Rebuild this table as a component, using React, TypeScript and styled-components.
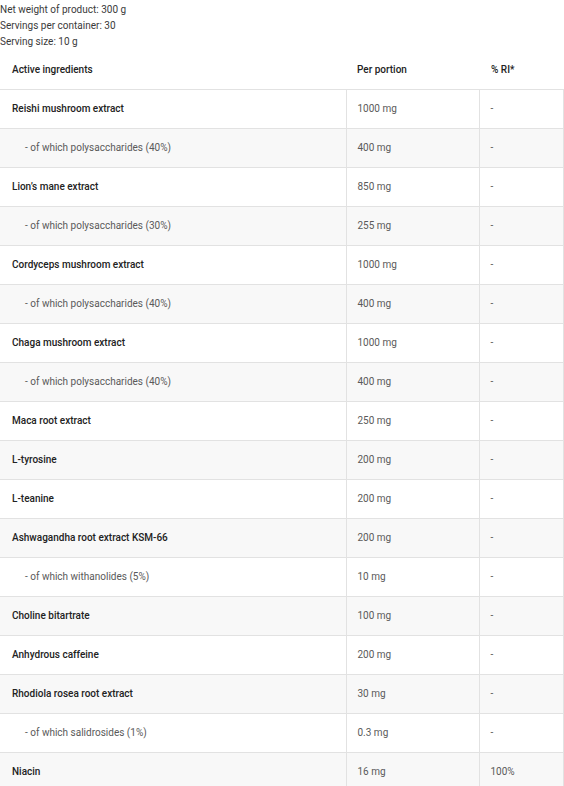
import React from "react";
import styled, { createGlobalStyle } from "styled-components";

const Global = createGlobalStyle`
  html, body { margin: 0; padding: 0; background: #fff; }
  body { font-family: Roboto, "Open Sans", "Liberation Sans", sans-serif; }
`;

const Page = styled.div`
  width: 564px;
  padding-top: 2px;
`;

const Info = styled.div`
  font-size: 10px;
  line-height: 16px;
  color: #3a3a3a;
`;

const Table = styled.table`
  width: 563px;
  border-collapse: collapse;
  table-layout: fixed;
  font-size: 10px;
`;

const HeadCell = styled.th<{ $w: number; $pl?: number }>`
  width: ${(p) => p.$w}px;
  height: 39px;
  padding: 0 12px 0 ${(p) => p.$pl ?? 12}px;
  box-sizing: border-box;
  text-align: left;
  font-weight: 500;
  color: #222;
  vertical-align: middle;
`;

const Row = styled.tr`
  &:nth-child(even) { background: #f8f8f8; }
`;

const Cell = styled.td<{ $first?: boolean; $last?: boolean; $sub?: boolean; $strong?: boolean }>`
  height: 39px;
  box-sizing: border-box;
  padding: 0 11px 0 ${(p) => (p.$sub ? 25 : p.$first ? 12 : 11)}px;
  border-top: 1px solid #e2e2e2;
  border-left: ${(p) => (p.$first ? "none" : "1px solid #e2e2e2")};
  border-right: ${(p) => (p.$last ? "1px solid #e2e2e2" : "none")};
  color: ${(p) => (p.$strong ? "#222" : "#5a5a5a")};
  font-weight: ${(p) => (p.$strong ? 500 : 400)};
  vertical-align: middle;
  white-space: nowrap;
`;

type Item = { name: string; amount: string; ri: string; sub?: boolean };

const items: Item[] = [
  { name: "Reishi mushroom extract", amount: "1000 mg", ri: "-" },
  { name: "- of which polysaccharides (40%)", amount: "400 mg", ri: "-", sub: true },
  { name: "Lion’s mane extract", amount: "850 mg", ri: "-" },
  { name: "- of which polysaccharides (30%)", amount: "255 mg", ri: "-", sub: true },
  { name: "Cordyceps mushroom extract", amount: "1000 mg", ri: "-" },
  { name: "- of which polysaccharides (40%)", amount: "400 mg", ri: "-", sub: true },
  { name: "Chaga mushroom extract", amount: "1000 mg", ri: "-" },
  { name: "- of which polysaccharides (40%)", amount: "400 mg", ri: "-", sub: true },
  { name: "Maca root extract", amount: "250 mg", ri: "-" },
  { name: "L-tyrosine", amount: "200 mg", ri: "-" },
  { name: "L-teanine", amount: "200 mg", ri: "-" },
  { name: "Ashwagandha root extract KSM-66", amount: "200 mg", ri: "-" },
  { name: "- of which withanolides (5%)", amount: "10 mg", ri: "-", sub: true },
  { name: "Choline bitartrate", amount: "100 mg", ri: "-" },
  { name: "Anhydrous caffeine", amount: "200 mg", ri: "-" },
  { name: "Rhodiola rosea root extract", amount: "30 mg", ri: "-" },
  { name: "- of which salidrosides (1%)", amount: "0.3 mg", ri: "-", sub: true },
  { name: "Niacin", amount: "16 mg", ri: "100%" },
];

export default function App() {
  return (
    <Page>
      <Global />
      <Info>
        <div>Net weight of product: 300 g</div>
        <div>Servings per container: 30</div>
        <div>Serving size: 10 g</div>
      </Info>
      <Table>
        <thead>
          <tr>
            <HeadCell $w={346}>Active ingredients</HeadCell>
            <HeadCell $w={133} $pl={11}>Per portion</HeadCell>
            <HeadCell $w={84}>% RI*</HeadCell>
          </tr>
        </thead>
        <tbody>
          {items.map((it, i) => (
            <Row key={i}>
              <Cell $first $sub={it.sub} $strong={!it.sub}>{it.name}</Cell>
              <Cell>{it.amount}</Cell>
              <Cell $last>{it.ri}</Cell>
            </Row>
          ))}
        </tbody>
      </Table>
    </Page>
  );
}
